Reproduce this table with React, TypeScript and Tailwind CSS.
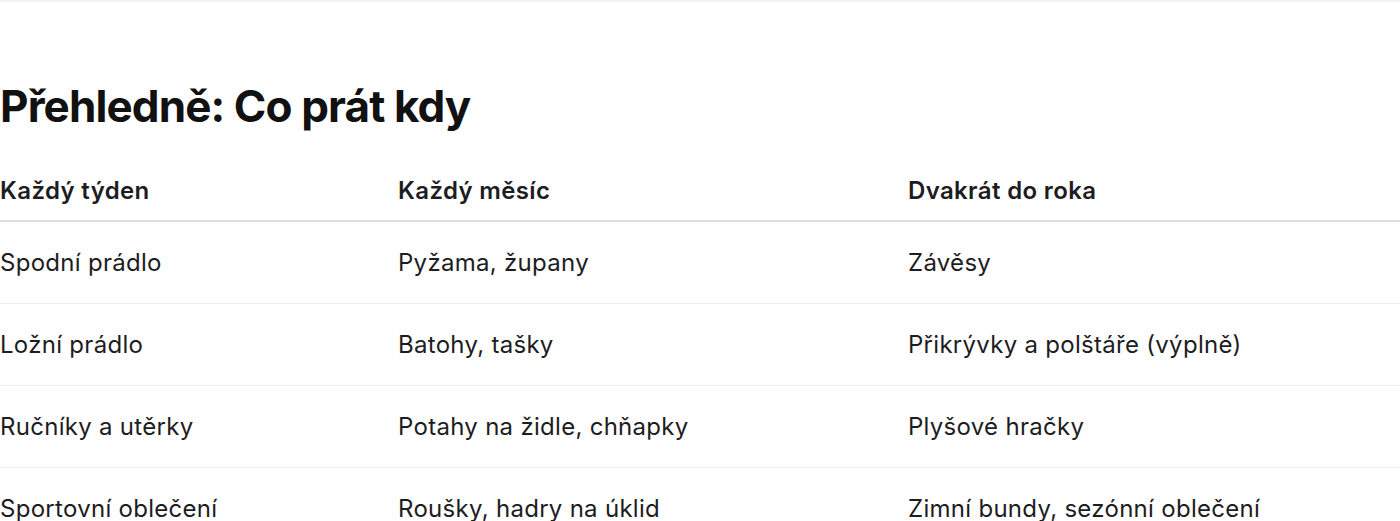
import React from "react";

const HEADERS = ["Každý týden", "Každý měsíc", "Dvakrát do roka"];

const ROWS = [
  ["Spodní prádlo", "Pyžama, župany", "Závěsy"],
  ["Ložní prádlo", "Batohy, tašky", "Přikrývky a polštáře (výplně)"],
  ["Ručníky a utěrky", "Potahy na židle, chňapky", "Plyšové hračky"],
  ["Sportovní oblečení", "Roušky, hadry na úklid", "Zimní bundy, sezónní oblečení"],
];

export default function App() {
  return (
    <div
      className="min-h-screen bg-white text-[#1d1d1f]"
      style={{ fontFamily: "Inter, 'Noto Sans', sans-serif" }}
    >
      <div className="h-[2px] w-full bg-[#f2f2f2]" />
      <section className="pt-[78px]">
        <h1 className="text-[44px] font-bold leading-[52px] tracking-[-0.02em] text-[#111]">
          Přehledně: Co prát kdy
        </h1>

        <div className="mt-[42px]">
          <div className="grid grid-cols-[398px_510px_1fr] border-b-2 border-[#dddddd] pb-[13px]">
            {HEADERS.map((h) => (
              <div key={h} className="text-[24px] font-semibold leading-[33px] tracking-[0.015em]">
                {h}
              </div>
            ))}
          </div>
          {ROWS.map((row, i) => (
            <div
              key={i}
              className="grid grid-cols-[398px_510px_1fr] border-b border-[#efefef] py-[24px]"
            >
              {row.map((cell) => (
                <div key={cell} className="text-[24px] leading-[33px] tracking-[0.012em]">
                  {cell}
                </div>
              ))}
            </div>
          ))}
        </div>
      </section>
    </div>
  );
}
